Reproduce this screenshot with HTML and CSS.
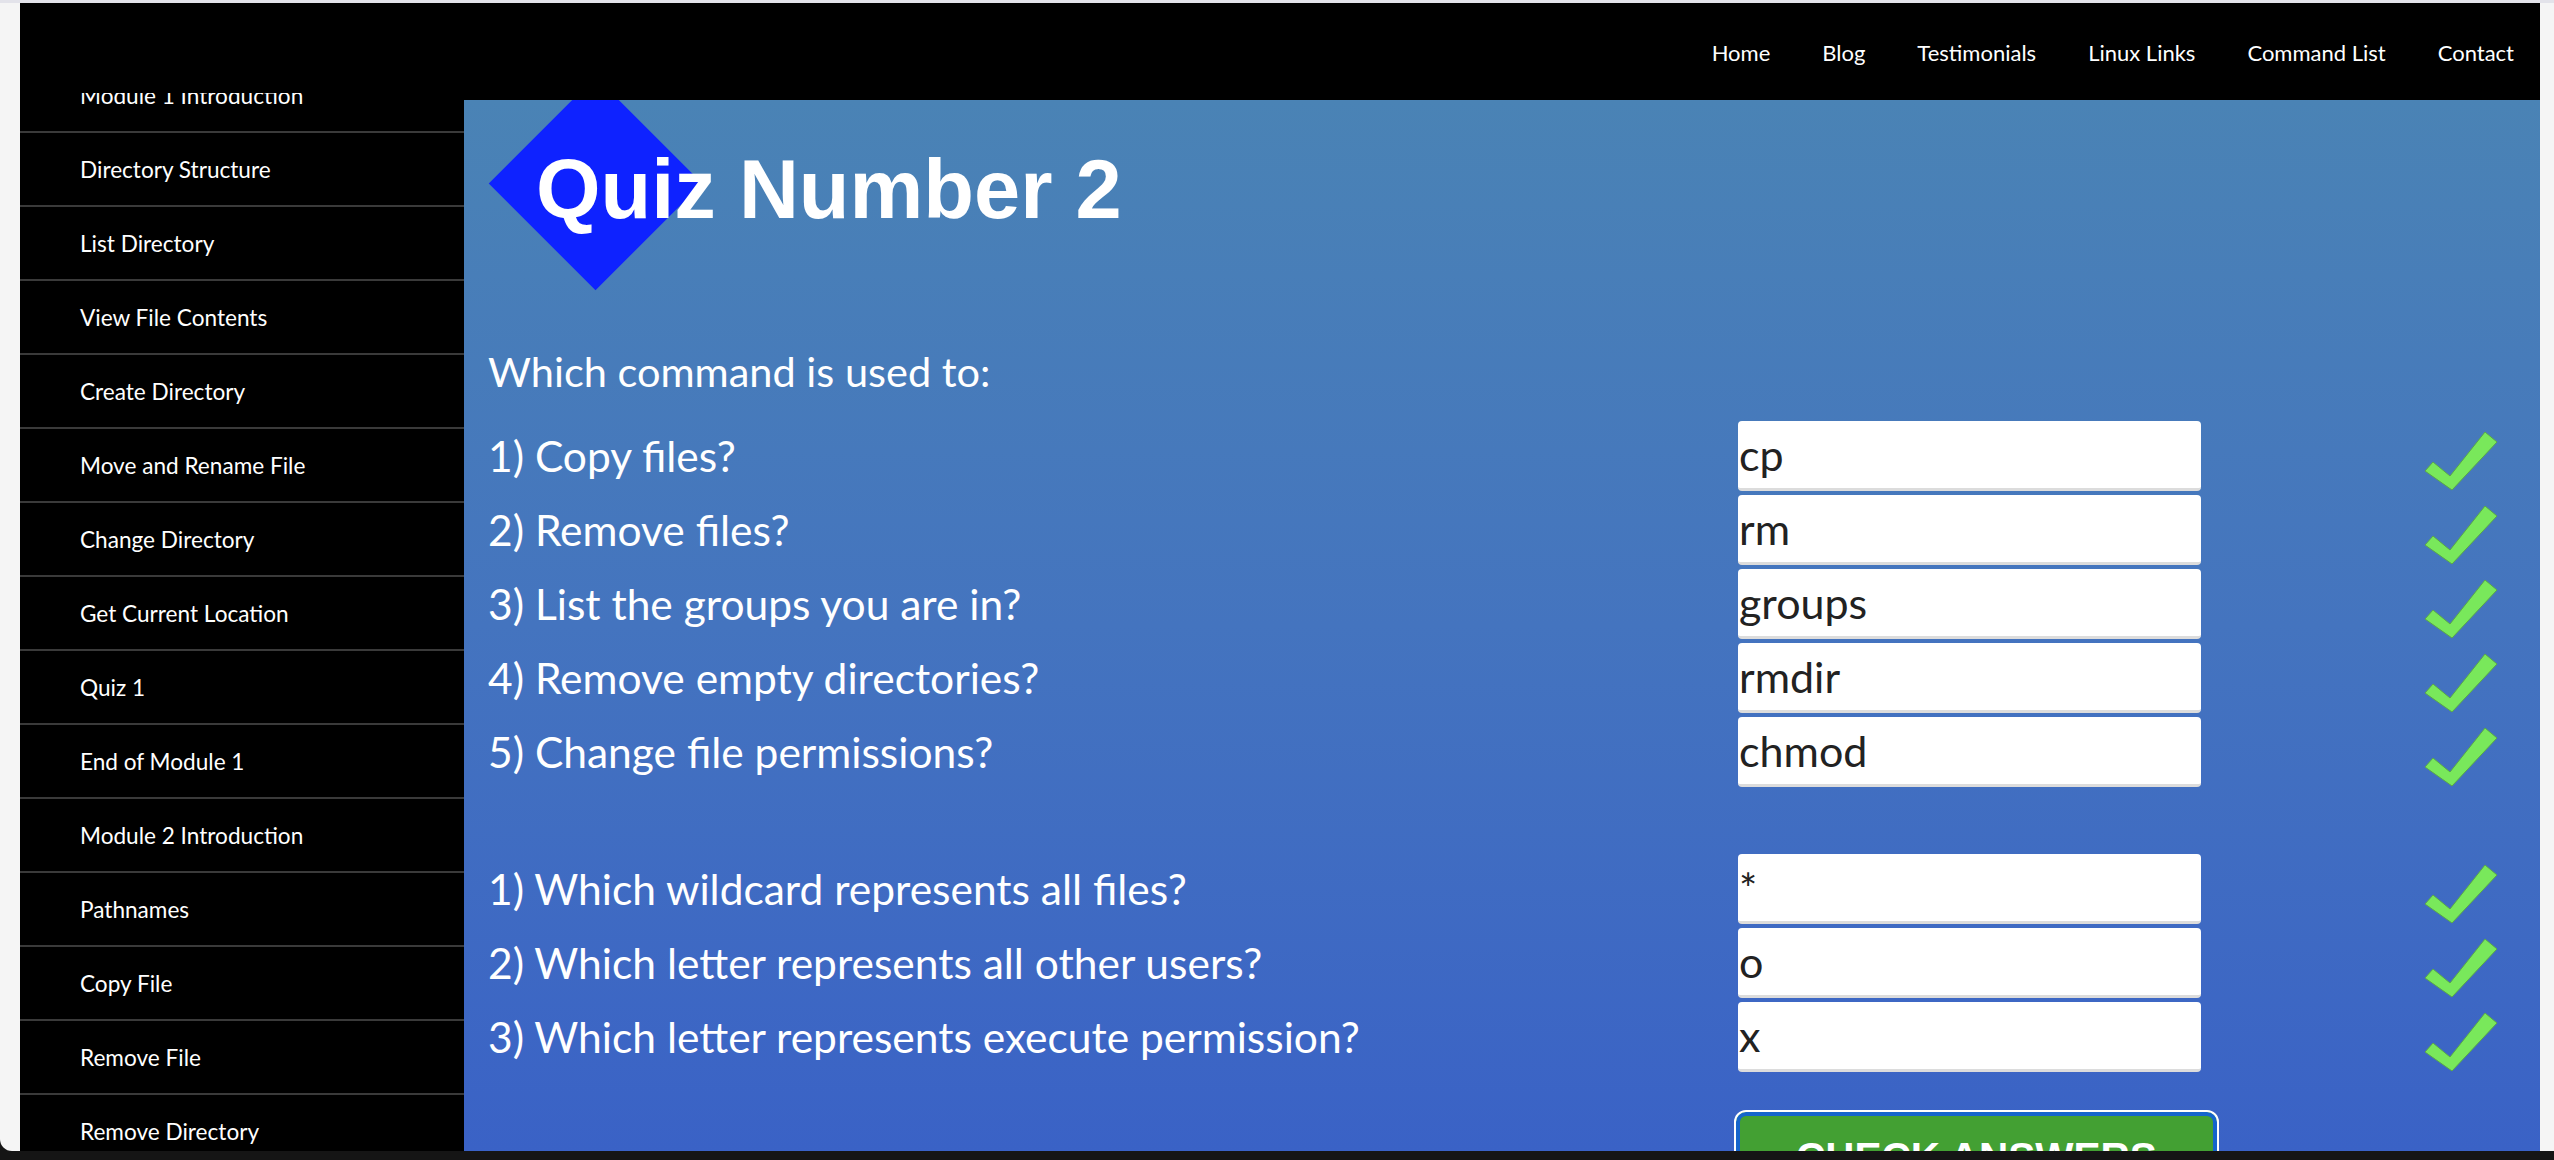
FILE: index.html
```html
<!DOCTYPE html>
<html lang="en">
<head>
<meta charset="utf-8">
<title>Quiz Number 2</title>
<link rel="stylesheet" href="styles.css">
</head>
<body>
<div class="page">
  <div class="topline"></div>
  <div class="frame">
    <header class="topbar">
      <nav>
        <ul class="menu">
          <li><a href="#">Home</a></li>
          <li><a href="#">Blog</a></li>
          <li><a href="#">Testimonials</a></li>
          <li><a href="#">Linux Links</a></li>
          <li><a href="#">Command List</a></li>
          <li><a href="#">Contact</a></li>
        </ul>
      </nav>
    </header>
    <div class="main">
      <aside class="sidebar">
        <ul class="side-list">
          <li class="side-item">Module 1 Introduction</li>
          <li class="side-item">Directory Structure</li>
          <li class="side-item">List Directory</li>
          <li class="side-item">View File Contents</li>
          <li class="side-item">Create Directory</li>
          <li class="side-item">Move and Rename File</li>
          <li class="side-item">Change Directory</li>
          <li class="side-item">Get Current Location</li>
          <li class="side-item">Quiz 1</li>
          <li class="side-item">End of Module 1</li>
          <li class="side-item">Module 2 Introduction</li>
          <li class="side-item">Pathnames</li>
          <li class="side-item">Copy File</li>
          <li class="side-item">Remove File</li>
          <li class="side-item">Remove Directory</li>
        </ul>
      </aside>
      <section class="content">
        <div class="quiz-head">
          <span class="diamond"></span>
          <h1 class="quiz-title">Quiz Number 2</h1>
        </div>
        <p class="intro">Which command is used to:</p>

        <div class="group group-one">
          <div class="row">
            <span class="label">1) Copy files?</span>
            <input class="answer" type="text" value="cp" readonly>
            <span class="spacer"></span>
            <svg class="check" viewBox="0 0 74 60"><polygon points="1,40 9,31 26,45 61,1 73,11 28,59"/></svg>
          </div>
          <div class="row">
            <span class="label">2) Remove files?</span>
            <input class="answer" type="text" value="rm" readonly>
            <span class="spacer"></span>
            <svg class="check" viewBox="0 0 74 60"><polygon points="1,40 9,31 26,45 61,1 73,11 28,59"/></svg>
          </div>
          <div class="row">
            <span class="label">3) List the groups you are in?</span>
            <input class="answer" type="text" value="groups" readonly>
            <span class="spacer"></span>
            <svg class="check" viewBox="0 0 74 60"><polygon points="1,40 9,31 26,45 61,1 73,11 28,59"/></svg>
          </div>
          <div class="row">
            <span class="label">4) Remove empty directories?</span>
            <input class="answer" type="text" value="rmdir" readonly>
            <span class="spacer"></span>
            <svg class="check" viewBox="0 0 74 60"><polygon points="1,40 9,31 26,45 61,1 73,11 28,59"/></svg>
          </div>
          <div class="row">
            <span class="label">5) Change file permissions?</span>
            <input class="answer" type="text" value="chmod" readonly>
            <span class="spacer"></span>
            <svg class="check" viewBox="0 0 74 60"><polygon points="1,40 9,31 26,45 61,1 73,11 28,59"/></svg>
          </div>
        </div>

        <div class="group group-two">
          <div class="row">
            <span class="label">1) Which wildcard represents all files?</span>
            <input class="answer" type="text" value="*" readonly>
            <span class="spacer"></span>
            <svg class="check" viewBox="0 0 74 60"><polygon points="1,40 9,31 26,45 61,1 73,11 28,59"/></svg>
          </div>
          <div class="row">
            <span class="label">2) Which letter represents all other users?</span>
            <input class="answer" type="text" value="o" readonly>
            <span class="spacer"></span>
            <svg class="check" viewBox="0 0 74 60"><polygon points="1,40 9,31 26,45 61,1 73,11 28,59"/></svg>
          </div>
          <div class="row">
            <span class="label">3) Which letter represents execute permission?</span>
            <input class="answer" type="text" value="x" readonly>
            <span class="spacer"></span>
            <svg class="check" viewBox="0 0 74 60"><polygon points="1,40 9,31 26,45 61,1 73,11 28,59"/></svg>
          </div>
        </div>

        <div class="actions">
          <span class="spacer"></span>
          <button class="check-btn" type="button">CHECK ANSWERS</button>
        </div>
      </section>
    </div>
  </div>
</div>
</body>
</html>
```

FILE: styles.css
```css
* { box-sizing: border-box; }

html, body {
  margin: 0;
  padding: 0;
}

body {
  background: #151515;
  height: 1160px;
  overflow: hidden;
  font-family: Lato, "Open Sans", sans-serif;
}

.page {
  height: 1151px;
  background: #f5f5f5;
  border-bottom-left-radius: 12px;
  display: flex;
  flex-direction: column;
  overflow: hidden;
}

.topline {
  height: 3px;
  background: #e3e3ea;
  flex: none;
}

.frame {
  flex: 1;
  margin: 0 14px 0 20px;
  background: #000;
  display: flex;
  flex-direction: column;
  overflow: hidden;
}

/* ---------- top navigation ---------- */
.topbar {
  height: 90px;
  flex: none;
  display: flex;
  justify-content: flex-end;
  align-items: center;
  padding-top: 8px;
}

.menu {
  list-style: none;
  margin: 0;
  padding: 0;
  display: flex;
}

.menu li a {
  display: block;
  padding: 0 26px;
  color: #fff;
  text-decoration: none;
  font-family: Lato, sans-serif;
  font-size: 22px;
}

/* ---------- layout ---------- */
.main {
  flex: 1;
  display: flex;
  min-height: 0;
}

.sidebar {
  width: 444px;
  flex: none;
  background: #000;
  overflow: hidden;
}

.side-list {
  list-style: none;
  margin: -34px 0 0 0;
  padding: 0;
}

.side-item {
  height: 74px;
  border-bottom: 2px solid #3a3a3a;
  display: flex;
  align-items: center;
  padding-left: 60px;
  color: #fff;
  font-family: Lato, sans-serif;
  font-size: 22.6px;
  white-space: nowrap;
}

.content {
  flex: 1;
  margin-top: 7px;
  padding-left: 24px;
  overflow: hidden;
  background: linear-gradient(180deg, #4a83b5 0%, #4474bf 50%, #3a62c6 100%);
}

/* ---------- heading image ---------- */
.quiz-head {
  position: relative;
  height: 236px;
}

.diamond {
  position: absolute;
  left: 32px;
  top: 8px;
  width: 151px;
  height: 151px;
  background: #0e22ff;
  transform: rotate(45deg);
}

.quiz-title {
  position: relative;
  margin: 0;
  padding: 49px 0 0 48px;
  font-family: "Liberation Sans", Arial, sans-serif;
  font-weight: bold;
  font-size: 83px;
  line-height: 82px;
  color: #fff;
  white-space: nowrap;
}

/* ---------- quiz ---------- */
.intro {
  margin: 0;
  font-family: Lato, sans-serif;
  font-size: 41.5px;
  line-height: 70px;
  color: #fff;
}

.group {
  display: flex;
  flex-direction: column;
  gap: 4px;
}

.group-one { margin-top: 15px; }
.group-two { margin-top: 67px; }

.row {
  display: grid;
  grid-template-columns: 1250px 463px 223px 74px;
  height: 70px;
}

.label {
  font-family: Lato, sans-serif;
  font-size: 42.5px;
  line-height: 70px;
  color: #fff;
  white-space: nowrap;
}

.answer {
  display: block;
  width: 463px;
  height: 70px;
  margin: 0;
  padding: 0 0 0 1px;
  border: 0;
  border-bottom: 3px solid #dcdcdc;
  border-radius: 4px;
  background: #fff;
  font-family: Lato, sans-serif;
  font-size: 43px;
  color: #222;
  outline: none;
}

.check {
  align-self: end;
  display: block;
  width: 74px;
  height: 60px;
}

.check polygon {
  fill: #79e85b;
  stroke: #5aa848;
  stroke-width: 1;
  stroke-linejoin: round;
}

.actions {
  display: grid;
  grid-template-columns: 1246px 485px;
  margin-top: 38px;
}

.check-btn {
  width: 485px;
  height: 94px;
  margin: 0;
  padding: 0;
  border: 2px solid #fff;
  border-radius: 12px;
  background: #43a033;
  box-shadow: inset 0 0 0 4px #1565cc;
  color: #fff;
  font-family: "Liberation Sans", Arial, sans-serif;
  font-weight: bold;
  font-size: 40.5px;
  cursor: pointer;
}
```
